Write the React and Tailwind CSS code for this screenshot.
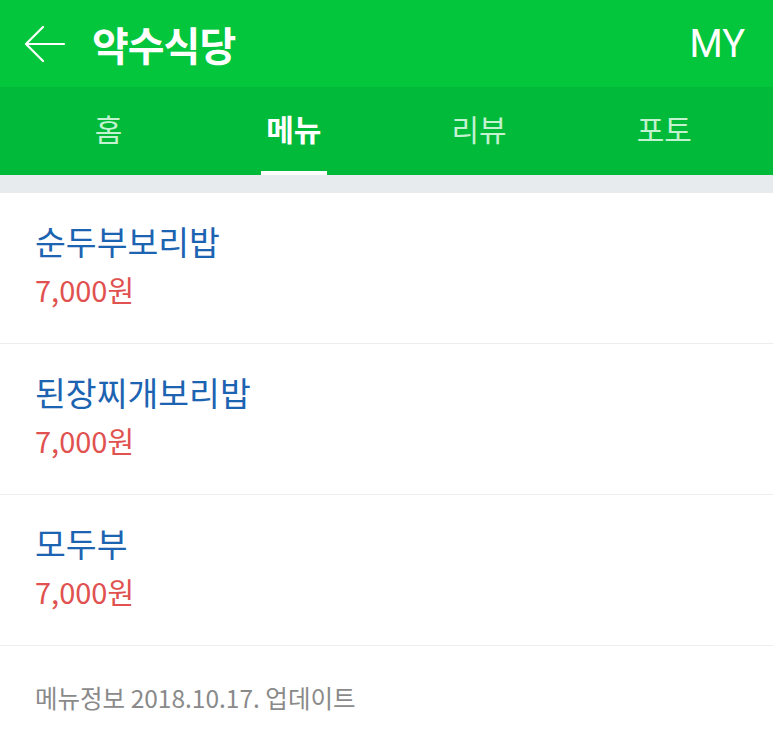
import React from "react";

const menus = [
  { name: "순두부보리밥", price: "7,000원" },
  { name: "된장찌개보리밥", price: "7,000원" },
  { name: "모두부", price: "7,000원" },
];

const tabs = ["홈", "메뉴", "리뷰", "포토"];

const font = { fontFamily: '"Noto Sans CJK KR", "Noto Sans", Roboto, sans-serif' };

export default function App() {
  return (
    <div className="w-[773px] h-[743px] overflow-hidden bg-white" style={font}>
      {/* Header */}
      <div className="h-[87px] bg-[#03c63c] flex items-center pl-[24px] pr-[28px]">
        <svg width="42" height="38" viewBox="0 0 42 38" fill="none" stroke="white" strokeWidth="2.2" strokeLinecap="round" strokeLinejoin="round">
          <path d="M40 19H3" />
          <path d="M19 2L2 19l17 17" />
        </svg>
        <h1 className="ml-[26px] text-[40px] font-bold text-white leading-none tracking-tight">약수식당</h1>
        <div className="ml-auto text-[38px] text-white leading-none" style={{ fontFamily: "Roboto, sans-serif" }}>MY</div>
      </div>

      {/* Tabs */}
      <div className="h-[88px] bg-[#02ba3a] flex px-[16px] pb-[5px]">
        {tabs.map((t) => {
          const active = t === "메뉴";
          return (
            <div key={t} className="flex-1 relative flex items-center justify-center">
              <span className={active ? "text-[30px] font-bold text-white" : "text-[30px] text-[#c2f2d0]"}>{t}</span>
              {active && <div className="absolute bottom-[-5px] left-1/2 -translate-x-1/2 w-[66px] h-[4px] bg-white" />}
            </div>
          );
        })}
      </div>

      <div className="h-[18px] bg-[#e8ebee]" />

      {/* Menu list */}
      {menus.map((m) => (
        <div key={m.name} className="h-[151px] border-b border-[#ebeeef] pl-[35px] pt-[26px]">
          <div className="text-[33.5px] leading-[44px] text-[#1c63b2]">{m.name}</div>
          <div className="text-[29px] leading-[40px] text-[#e0514f] mt-[6px]">{m.price}</div>
        </div>
      ))}

      <div className="pl-[35px] pt-[34px] text-[24.5px] text-[#8a8a8a]">메뉴정보 2018.10.17. 업데이트</div>
    </div>
  );
}
